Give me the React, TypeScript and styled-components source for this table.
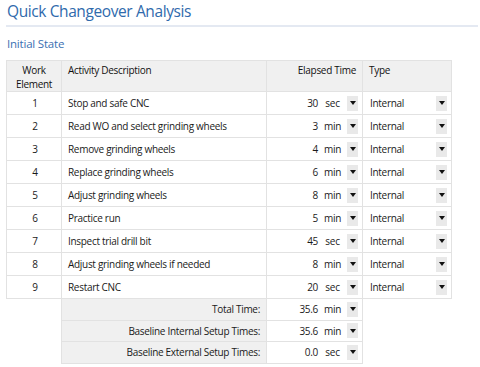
import { createGlobalStyle, styled } from 'styled-components';

const GlobalStyle = createGlobalStyle`
  body {
    margin: 0;
    background: #ffffff;
    font-family: 'Open Sans', 'Noto Sans', sans-serif;
    color: #1a1a1a;
  }
`;

const Page = styled.div`
  padding: 1px 2px 0 6px;
`;

const Title = styled.h1`
  margin: 0;
  padding: 0 0 3px 1px;
  font-size: 15.5px;
  line-height: 21px;
  letter-spacing: -0.4px;
  font-weight: 400;
  color: #2f6aac;
  border-bottom: 2px solid #e4e9f2;
`;

const Section = styled.h2`
  margin: 9px 0 8px 1px;
  font-size: 11.5px;
  line-height: 16px;
  letter-spacing: -0.2px;
  font-weight: 400;
  color: #3a70b2;
`;

const Table = styled.table`
  border-collapse: collapse;
  font-size: 10px;
  letter-spacing: -0.3px;
  table-layout: fixed;
  width: 445px;
`;

const HeadCell = styled.th<{ $align?: string }>`
  background: #f0f0f0;
  border: 1px solid #e2e2e2;
  height: 31px;
  box-sizing: border-box;
  padding: 3px 6px 0;
  font-weight: 400;
  color: #111111;
  text-align: ${(p) => p.$align ?? 'left'};
  vertical-align: top;
  line-height: 13.5px;
`;

const Cell = styled.td<{ $align?: string }>`
  border: 1px solid #e2e2e2;
  height: 23px;
  box-sizing: border-box;
  padding: 0 4px 0 6px;
  line-height: 14px;
  text-align: ${(p) => p.$align ?? 'left'};
  vertical-align: middle;
`;

const LabelCell = styled.td`
  background: #f0f0f0;
  border: 1px solid #e2e2e2;
  height: 21.5px;
  box-sizing: border-box;
  padding: 0 6px;
  line-height: 14px;
  text-align: right;
`;

const TotalCell = styled(Cell)`
  height: 21.5px;
`;

const EmptyCell = styled.td`
  border: none;
`;

const TimeBox = styled.div`
  display: flex;
  align-items: center;
  justify-content: flex-end;
  gap: 5px;
`;

const Unit = styled.span`
  width: 19px;
  text-align: center;
`;

const TypeBox = styled.div`
  display: flex;
  align-items: center;
  justify-content: space-between;
  padding-left: 1px;
`;

const Arrow = styled.span`
  display: inline-flex;
  align-items: center;
  justify-content: center;
  width: 11px;
  height: 15px;
  background: #e9e9e9;

  &::after {
    content: '';
    border-left: 3px solid transparent;
    border-right: 3px solid transparent;
    border-top: 4px solid #111111;
  }
`;

type Step = {
  name: string;
  time: number;
  unit: 'sec' | 'min';
};

const steps: Step[] = [
  { name: 'Stop and safe CNC', time: 30, unit: 'sec' },
  { name: 'Read WO and select grinding wheels', time: 3, unit: 'min' },
  { name: 'Remove grinding wheels', time: 4, unit: 'min' },
  { name: 'Replace grinding wheels', time: 6, unit: 'min' },
  { name: 'Adjust grinding wheels', time: 8, unit: 'min' },
  { name: 'Practice run', time: 5, unit: 'min' },
  { name: 'Inspect trial drill bit', time: 45, unit: 'sec' },
  { name: 'Adjust grinding wheels if needed', time: 8, unit: 'min' },
  { name: 'Restart CNC', time: 20, unit: 'sec' },
];

const totals = [
  { label: 'Total Time:', value: '35.6', unit: 'min' },
  { label: 'Baseline Internal Setup Times:', value: '35.6', unit: 'min' },
  { label: 'Baseline External Setup Times:', value: '0.0', unit: 'sec' },
];

const Elapsed = ({ value, unit }: { value: string | number; unit: string }) => (
  <TimeBox>
    <span>{value}</span>
    <Unit>{unit}</Unit>
    <Arrow />
  </TimeBox>
);

export default function App() {
  return (
    <Page>
      <GlobalStyle />
      <Title>Quick Changeover Analysis</Title>
      <Section>Initial State</Section>
      <Table>
        <colgroup>
          <col style={{ width: 55 }} />
          <col style={{ width: 205 }} />
          <col style={{ width: 96 }} />
          <col style={{ width: 89 }} />
        </colgroup>
        <thead>
          <tr>
            <HeadCell $align="center">
              Work
              <br />
              Element
            </HeadCell>
            <HeadCell>Activity Description</HeadCell>
            <HeadCell $align="right">Elapsed Time</HeadCell>
            <HeadCell>Type</HeadCell>
          </tr>
        </thead>
        <tbody>
          {steps.map((s, i) => (
            <tr key={s.name}>
              <Cell $align="center">{i + 1}</Cell>
              <Cell>{s.name}</Cell>
              <Cell>
                <Elapsed value={s.time} unit={s.unit} />
              </Cell>
              <Cell>
                <TypeBox>
                  Internal
                  <Arrow />
                </TypeBox>
              </Cell>
            </tr>
          ))}
          {totals.map((t) => (
            <tr key={t.label}>
              <EmptyCell />
              <LabelCell>{t.label}</LabelCell>
              <TotalCell>
                <Elapsed value={t.value} unit={t.unit} />
              </TotalCell>
              <EmptyCell />
            </tr>
          ))}
        </tbody>
      </Table>
    </Page>
  );
}
